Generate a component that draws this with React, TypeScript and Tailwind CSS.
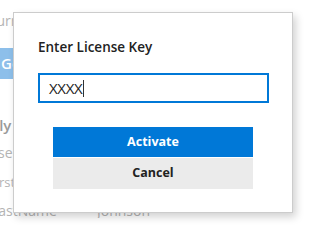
const font = { fontFamily: '"Open Sans", "Noto Sans", sans-serif' };

export default function App() {
  return (
    <div className="relative h-[225px] w-[306px] overflow-hidden bg-white" style={font}>
      {/* page behind the dialog */}
      <div className="h-[218px] overflow-hidden text-[14px] text-[#b4b4b4]">
        <div className="-ml-[25px] pt-[12px] leading-[18px]">Return</div>
        <div className="mt-[18px] flex h-[31px] w-[60px] -ml-[1px] items-center bg-[#8dbfea] pl-[2px] text-[15px] font-semibold text-white">
          Get
        </div>
        <div className="-ml-[36px] mt-[36px] text-[15px] font-semibold leading-[20px] text-[#9a9a9a]">Family</div>
        <div className="-ml-[36px] mt-[8px] leading-[20px]">License</div>
        <div className="-ml-[11px] mt-[9px] text-[13px] leading-[20px]">FirstName</div>
        <div className="mt-[9px] flex leading-[20px]">
          <span className="-ml-[9px] w-[106px]">LastName</span>
          <span>Johnson</span>
        </div>
      </div>

      {/* dialog */}
      <div className="absolute left-[13px] top-[12px] h-[201px] w-[280px] border border-[#cccccc] bg-white shadow-[3px_4px_8px_rgba(0,0,0,0.18)]">
        <div className="flex flex-col pl-[24px] pt-[24px]">
          <div className="text-[13.5px] font-semibold leading-[20px] text-[#222]">Enter License Key</div>
          <div className="mt-[16px] flex h-[30px] w-[231px] items-center border-2 border-[#0078d7] pl-[9px] text-[15px] text-[#222]">
            <span className="tracking-[-0.3px]">XXXX</span>
            <span className="ml-[1px] h-[17px] w-px bg-[#333]" />
          </div>
          <div className="ml-[15px] mt-[24px] flex w-[200px] flex-col gap-px">
            <button className="h-[30px] bg-[#0078d7] text-[12.5px] font-bold text-white">Activate</button>
            <button className="h-[31px] bg-[#ebebeb] text-[12.5px] font-bold text-[#222]">Cancel</button>
          </div>
        </div>
      </div>
    </div>
  );
}
